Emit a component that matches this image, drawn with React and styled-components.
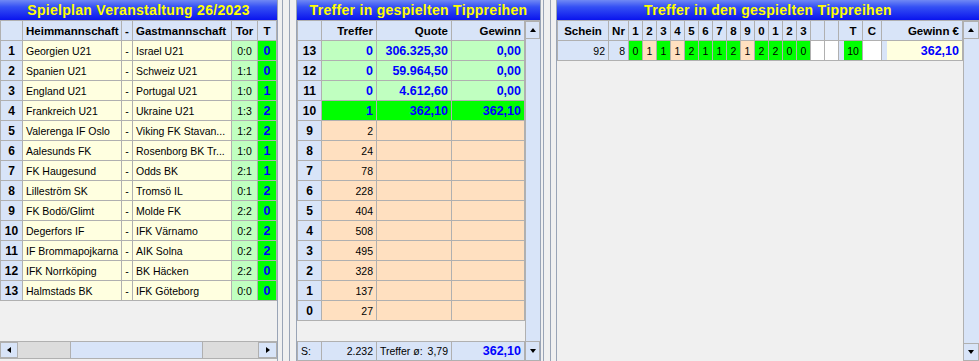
import React from 'react';
import styled, { createGlobalStyle, css } from 'styled-components';

const C = {
  bg: '#f0f0f0',
  head: '#d8e4f8',
  cream: '#ffffe0',
  lightGreen: '#c0ffc0',
  green: '#00ff00',
  peach: '#ffe0c0',
  white: '#ffffff',
  blue: '#0000ff',
  line: '#b0b0b0',
  frame: '#99a4b6',
  track: '#dcdcdc',
};

const GlobalStyle = createGlobalStyle`
  html, body { margin: 0; padding: 0; background: ${C.bg}; }
  body { font-family: "Liberation Sans", Arial, sans-serif; }
  *, *::before, *::after { box-sizing: border-box; }
`;

const Screen = styled.div`
  width: 979px;
  height: 361px;
  display: flex;
  background: ${C.bg};
  overflow: hidden;
`;

const Panel = styled.section`
  flex: none;
  display: flex;
  flex-direction: column;
  width: ${(p) => p.$w}px;
  height: 361px;
  border-left: ${(p) => (p.$left ? `1px solid ${C.frame}` : 'none')};
  border-right: ${(p) => (p.$right ? `1px solid ${C.frame}` : 'none')};
`;

const Splitter = styled.div`
  flex: none;
  width: ${(p) => p.$w}px;
  padding-left: ${(p) => p.$offset}px;
  display: flex;
`;

const SplitLines = styled.div`
  width: 8px;
  height: 100%;
  border-left: 1px solid ${C.frame};
  border-right: 1px solid ${C.frame};
`;

const TitleBar = styled.header`
  flex: none;
  height: 20px;
  background: linear-gradient(180deg, #7089f4 0%, #3450f4 35%, #0a14ee 100%);
  color: #ffff00;
  font-weight: 700;
  font-size: 14px;
  letter-spacing: 0.3px;
  display: flex;
  align-items: center;
  justify-content: center;
  white-space: nowrap;
`;

const Body = styled.div`
  flex: 1;
  display: flex;
  min-height: 0;
`;

const MainCol = styled.div`
  flex: 1;
  display: flex;
  flex-direction: column;
  min-width: 0;
`;

const Grid = styled.div`
  flex: none;
  display: grid;
  grid-template-columns: ${(p) => p.$cols};
  grid-auto-rows: ${(p) => p.$rowH || 20}px;
  border-left: 1px solid ${C.line};
  border-top: 1px solid ${C.line};
  align-self: flex-start;
`;

const Filler = styled.div`
  flex: 1;
`;

const alignMap = { left: 'flex-start', center: 'center', right: 'flex-end' };

const Cell = styled.div`
  border-right: 1px solid ${C.line};
  border-bottom: 1px solid ${C.line};
  background: ${(p) => p.$bg || C.cream};
  color: ${(p) => (p.$strong ? C.blue : '#000')};
  font-weight: ${(p) => (p.$strong ? 700 : 400)};
  font-size: ${(p) => (p.$strong ? '12.5px' : '10.5px')};
  display: flex;
  align-items: center;
  justify-content: ${(p) => alignMap[p.$align || 'left']};
  padding: 0 ${(p) => (p.$pad ?? 3)}px;
  white-space: nowrap;
  overflow: hidden;
`;

const HeadCell = styled(Cell)`
  background: ${C.head};
  color: #000;
  font-weight: 700;
  font-size: 11.5px;
`;

const NumCell = styled(Cell)`
  background: ${C.head};
  color: #000;
  font-weight: 700;
  font-size: 12px;
  justify-content: center;
  padding: 1px 0 0;
`;

const SplitCell = styled(Cell)`
  justify-content: space-between;
`;

const HScroll = styled.div`
  flex: none;
  height: 18px;
  margin-bottom: 2px;
  display: flex;
  border-top: 1px solid ${C.line};
  border-bottom: 1px solid ${C.line};
`;

const ScrollBtn = styled.div`
  flex: none;
  width: ${(p) => p.$w || 18}px;
  height: ${(p) => p.$h || 'auto'};
  background: ${C.head};
  border: 1px solid ${C.line};
  display: flex;
  align-items: center;
  justify-content: center;
`;

const HTrack = styled.div`
  flex: 1;
  background: ${C.track};
  display: flex;
`;

const Thumb = styled.div`
  margin-left: 52px;
  width: 133px;
  background: ${C.head};
  border-left: 1px solid ${C.line};
  border-right: 1px solid ${C.line};
`;

const VScroll = styled.div`
  flex: none;
  width: ${(p) => p.$w}px;
  display: flex;
  flex-direction: column;
  border-top: 1px solid ${C.line};
`;

const VTrack = styled.div`
  flex: 1;
  background: ${C.head};
  border-left: 1px solid ${C.line};
`;

const Arrow = styled.span`
  width: 0;
  height: 0;
  ${(p) =>
    p.$dir === 'up' &&
    css`
      border-left: 3.5px solid transparent;
      border-right: 3.5px solid transparent;
      border-bottom: 4px solid #000;
    `}
  ${(p) =>
    p.$dir === 'down' &&
    css`
      border-left: 3.5px solid transparent;
      border-right: 3.5px solid transparent;
      border-top: 4px solid #000;
    `}
  ${(p) =>
    p.$dir === 'left' &&
    css`
      border-top: 3.5px solid transparent;
      border-bottom: 3.5px solid transparent;
      border-right: 4px solid #000;
    `}
  ${(p) =>
    p.$dir === 'right' &&
    css`
      border-top: 3.5px solid transparent;
      border-bottom: 3.5px solid transparent;
      border-left: 4px solid #000;
    `}
`;

const matches = [
  ['Georgien U21', 'Israel U21', '0:0', '0'],
  ['Spanien U21', 'Schweiz U21', '1:1', '0'],
  ['England U21', 'Portugal U21', '1:0', '1'],
  ['Frankreich U21', 'Ukraine U21', '1:3', '2'],
  ['Valerenga IF Oslo', 'Viking FK Stavan...', '1:2', '2'],
  ['Aalesunds FK', 'Rosenborg BK Tr...', '1:0', '1'],
  ['FK Haugesund', 'Odds BK', '2:1', '1'],
  ['Lilleström SK', 'Tromsö IL', '0:1', '2'],
  ['FK Bodö/Glimt', 'Molde FK', '2:2', '0'],
  ['Degerfors IF', 'IFK Värnamo', '0:2', '2'],
  ['IF Brommapojkarna', 'AIK Solna', '0:2', '2'],
  ['IFK Norrköping', 'BK Häcken', '2:2', '0'],
  ['Halmstads BK', 'IFK Göteborg', '0:0', '0'],
];

const hits = [
  [13, '0', '306.325,30', '0,00'],
  [12, '0', '59.964,50', '0,00'],
  [11, '0', '4.612,60', '0,00'],
  [10, '1', '362,10', '362,10'],
  [9, '2'],
  [8, '24'],
  [7, '78'],
  [6, '228'],
  [5, '404'],
  [4, '508'],
  [3, '495'],
  [2, '328'],
  [1, '137'],
  [0, '27'],
];

const tips = ['0', '1', '1', '1', '2', '1', '1', '2', '1', '2', '2', '0', '0'];
const results = matches.map((m) => m[3]);
const tipHeads = ['1', '2', '3', '4', '5', '6', '7', '8', '9', '0', '1', '2', '3'];

function Spielplan() {
  return (
    <Panel $w={278} $right>
      <TitleBar>Spielplan Veranstaltung 26/2023</TitleBar>
      <Grid $cols="22px 99px 11px 99px 26px 19px">
        <HeadCell />
        <HeadCell>Heimmannschaft</HeadCell>
        <HeadCell $align="center" $pad={0}>-</HeadCell>
        <HeadCell>Gastmannschaft</HeadCell>
        <HeadCell $align="center" $pad={0}>Tor</HeadCell>
        <HeadCell $align="center" $pad={0}>T</HeadCell>
        {matches.map(([home, guest, tor, t], i) => (
          <React.Fragment key={i}>
            <NumCell>{i + 1}</NumCell>
            <Cell>{home}</Cell>
            <Cell $align="center" $pad={0}>-</Cell>
            <Cell>{guest}</Cell>
            <Cell $bg={C.lightGreen} $align="center" $pad={0}>{tor}</Cell>
            <Cell $bg={C.green} $align="center" $pad={0} $strong>{t}</Cell>
          </React.Fragment>
        ))}
      </Grid>
      <Filler />
      <HScroll>
        <ScrollBtn $w={18}><Arrow $dir="left" /></ScrollBtn>
        <HTrack><Thumb /></HTrack>
        <ScrollBtn $w={19}><Arrow $dir="right" /></ScrollBtn>
      </HScroll>
    </Panel>
  );
}

function TrefferPanel() {
  const cols = '24px 55px 75px 73px';
  return (
    <Panel $w={245} $left $right>
      <TitleBar>Treffer in gespielten Tippreihen</TitleBar>
      <Body>
        <MainCol>
          <Grid $cols={cols}>
            <HeadCell />
            <HeadCell $align="right">Treffer</HeadCell>
            <HeadCell $align="right">Quote</HeadCell>
            <HeadCell $align="right">Gewinn</HeadCell>
            {hits.map(([n, count, quote, win]) => {
              const won = quote !== undefined;
              const bg = n === 10 ? C.green : won ? C.lightGreen : C.peach;
              return (
                <React.Fragment key={n}>
                  <NumCell>{n}</NumCell>
                  <Cell $bg={bg} $align="right" $strong={won}>{count}</Cell>
                  <Cell $bg={bg} $align="right" $strong={won}>{quote}</Cell>
                  <Cell $bg={bg} $align="right" $strong={won}>{win}</Cell>
                </React.Fragment>
              );
            })}
          </Grid>
          <Filler />
          <Grid $cols={cols} $rowH={19}>
            <Cell $bg={C.head}>S:</Cell>
            <Cell $bg={C.head} $align="right">2.232</Cell>
            <SplitCell $bg={C.head}>
              <span>Treffer ø:</span>
              <span>3,79</span>
            </SplitCell>
            <Cell $bg={C.head} $align="right" $strong>362,10</Cell>
          </Grid>
        </MainCol>
        <VScroll $w={15}>
          <ScrollBtn $w={15} $h="18px"><Arrow $dir="up" /></ScrollBtn>
          <VTrack />
          <ScrollBtn $w={15} $h="20px"><Arrow $dir="down" /></ScrollBtn>
        </VScroll>
      </Body>
    </Panel>
  );
}

function TippreihenPanel() {
  const cols = '51px 20px ' + Array(15).fill('14px').join(' ') + ' 5px 19px 19px 5px 76px';
  return (
    <Panel $w={423} $left>
      <TitleBar>Treffer in den gespielten Tippreihen</TitleBar>
      <Body>
        <MainCol>
          <Grid $cols={cols}>
            <HeadCell $align="center" $pad={0}>Schein</HeadCell>
            <HeadCell $align="center" $pad={0}>Nr</HeadCell>
            {tipHeads.map((h, i) => (
              <HeadCell key={i} $align="center" $pad={0}>{h}</HeadCell>
            ))}
            <HeadCell />
            <HeadCell />
            <HeadCell />
            <HeadCell $align="center" $pad={0}>T</HeadCell>
            <HeadCell $align="center" $pad={0}>C</HeadCell>
            <HeadCell />
            <HeadCell $align="right">Gewinn €</HeadCell>

            <Cell $bg={C.head} $align="right">92</Cell>
            <Cell $bg={C.head} $align="right">8</Cell>
            {tips.map((t, i) => (
              <Cell key={i} $bg={t === results[i] ? C.green : C.peach} $align="center" $pad={0}>
                {t}
              </Cell>
            ))}
            <Cell $bg={C.white} />
            <Cell $bg={C.white} />
            <Cell $bg={C.head} />
            <Cell $bg={C.green} $align="center" $pad={0}>10</Cell>
            <Cell $bg={C.white} />
            <Cell $bg={C.head} />
            <Cell $align="right" $strong>362,10</Cell>
          </Grid>
          <Filler />
        </MainCol>
        <VScroll $w={16}>
          <ScrollBtn $w={16} $h="18px"><Arrow $dir="up" /></ScrollBtn>
          <VTrack />
          <ScrollBtn $w={16} $h="18px"><Arrow $dir="down" /></ScrollBtn>
        </VScroll>
      </Body>
    </Panel>
  );
}

export default function App() {
  return (
    <>
      <GlobalStyle />
      <Screen>
        <Spielplan />
        <Splitter $w={18} $offset={4}><SplitLines /></Splitter>
        <TrefferPanel />
        <Splitter $w={15} $offset={2}><SplitLines /></Splitter>
        <TippreihenPanel />
      </Screen>
    </>
  );
}
